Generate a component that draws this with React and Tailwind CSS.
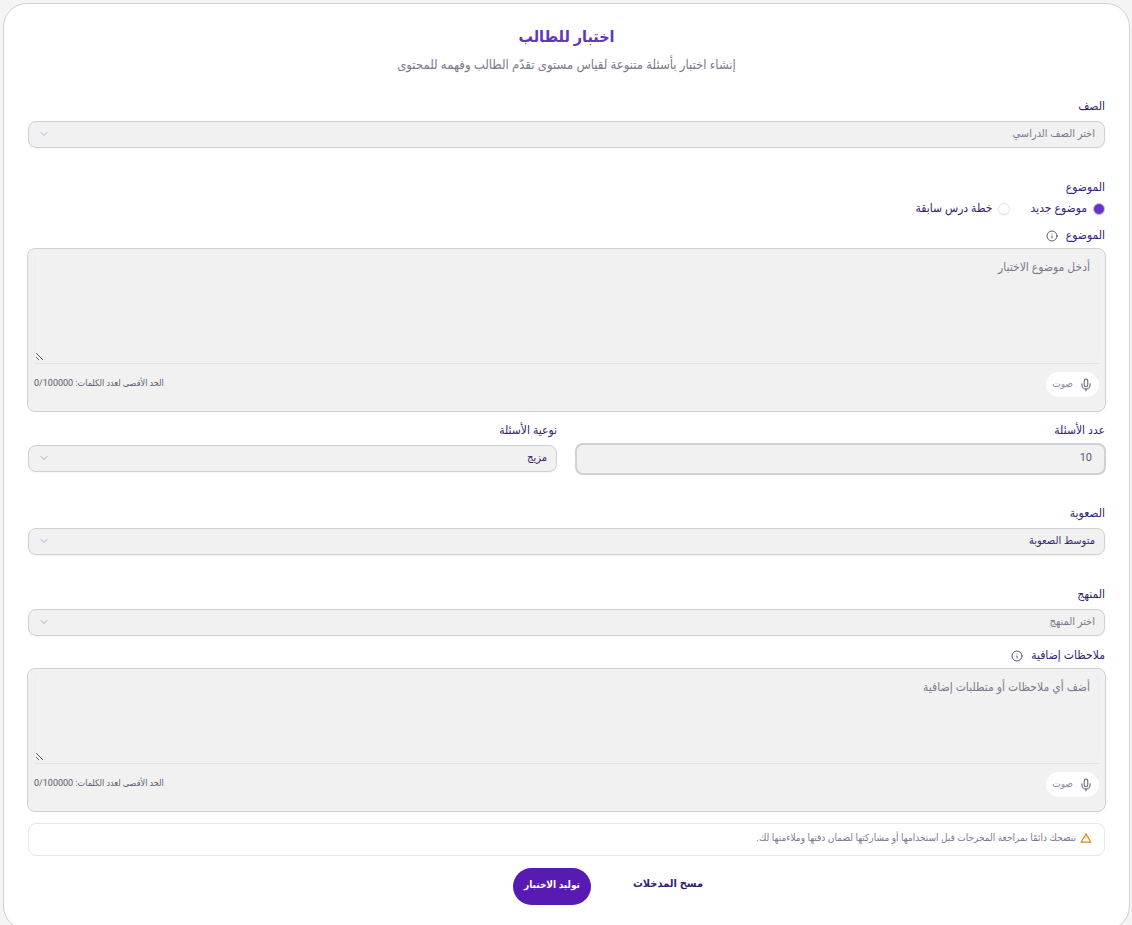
import { useState } from "react";
import { ChevronDown, Info, Mic } from "lucide-react";

function Label({ htmlFor, children }) {
  return (
    <label
      htmlFor={htmlFor}
      className="block text-[12px] leading-4 text-[#35216f]"
    >
      {children}
    </label>
  );
}

function WarningIcon() {
  return (
    <svg
      viewBox="0 0 12 12"
      fill="none"
      stroke="currentColor"
      strokeLinejoin="round"
      strokeLinecap="round"
      className="mb-[3px] size-3 text-[#d08a13]"
      aria-hidden="true"
    >
      <path d="M6 1.8 L10.9 10.2 H1.1 Z" strokeWidth="1.2" />
      <path d="M6 5 V6.2" strokeWidth="0.9" />
    </svg>
  );
}

function SelectField({ id, label, options, placeholder, chevron }) {
  return (
    <div>
      <Label htmlFor={id}>{label}</Label>
      <div className="relative mt-[7px]">
        <select
          id={id}
          className={`block h-[27px] w-full appearance-none rounded-lg border border-[#d0d0d4] bg-[#f1f1f1] px-[9px] text-[11px] shadow-xs outline-none ${
            placeholder ? "text-[#7d7a8c]" : "text-[#3b2a70]"
          }`}
        >
          {options.map((option) => (
            <option key={option}>{option}</option>
          ))}
        </select>
        <ChevronDown
          className={`pointer-events-none absolute top-[7px] left-[10px] size-3 ${chevron}`}
          strokeWidth={2}
        />
      </div>
    </div>
  );
}

function TextBox({ id, label, placeholder, height }) {
  const [value, setValue] = useState("");
  const words = value.trim() ? value.trim().split(/\s+/).length : 0;
  return (
    <div>
      <div className="flex items-center gap-2">
        <Label htmlFor={id}>{label}</Label>
        <Info className="mt-[2px] size-3 text-[#5d5870]" strokeWidth={2} />
      </div>
      <div className="-mx-px mt-[5px] rounded-lg border border-[#d0d0d4] bg-[#f1f1f1] px-[6px] pt-[5px] pb-[14px]">
        <textarea
          id={id}
          value={value}
          onChange={(e) => setValue(e.target.value)}
          placeholder={placeholder}
          className={`block w-full rounded-lg border border-[#ededed] border-t-transparent px-2 py-1 text-[12px] leading-4 text-[#3b2a70] outline-none placeholder:text-[#7d7a8c] ${height}`}
        />
        <div className="mt-px flex items-start justify-between border-t border-[#e3e3e5] pt-2">
          <button
            type="button"
            className="flex h-[25px] items-center gap-[6px] rounded-full bg-white px-[6px] text-[10px] text-[#8b8797]"
          >
            <Mic className="size-[14px] text-[#6f6b80]" strokeWidth={2} />
            <span className="pb-[3px]">صوت</span>
          </button>
          <p className="pt-[5px] text-[9px] leading-3 text-[#5d5870]">
            الحد الأقصى لعدد الكلمات: {words}/100000
          </p>
        </div>
      </div>
    </div>
  );
}

function Topic({ value, text, checked, onChange }) {
  return (
    <label className="flex items-center gap-[6px] text-[12px] leading-4 text-[#35216f]">
      <input
        type="radio"
        name="topic"
        value={value}
        checked={checked}
        onChange={onChange}
        className="mt-0.5 size-3 appearance-none rounded-full border border-[#e2e2e6] bg-white shadow-xs checked:border-[#c9c3dd] checked:bg-[#6534c4]"
      />
      {text}
    </label>
  );
}

export default function App() {
  const [topic, setTopic] = useState("new");
  return (
    <div
      dir="rtl"
      className="min-h-screen bg-[#f4f4f4] pt-[3px] pr-[2px] pl-[3px] font-['Roboto','DejaVu_Sans_Condensed','DejaVu_Sans',sans-serif]"
    >
      <form
        onSubmit={(e) => e.preventDefault()}
        className="rounded-3xl border border-[#d0d0d4] bg-white px-6 pt-[21px] pb-6"
      >
        <header className="text-center">
          <h1 className="text-[16px] leading-6 font-bold text-[#5f37b9]">
            اختبار للطالب
          </h1>
          <p className="mt-2 text-[13px] leading-4 text-[#7d7a8c]">
            إنشاء اختبار بأسئلة متنوعة لقياس مستوى تقدّم الطالب وفهمه للمحتوى
          </p>
        </header>

        <div className="mt-[25px]">
          <SelectField
            id="grade"
            label="الصف"
            options={["اختر الصف الدراسي"]}
            placeholder
            chevron="text-[#9db9e6]"
          />
        </div>

        <fieldset className="mt-[31px]">
          <legend className="text-[12px] leading-4 text-[#35216f]">
            الموضوع
          </legend>
          <div className="mt-[5px] flex gap-5">
            <Topic
              value="new"
              text="موضوع جديد"
              checked={topic === "new"}
              onChange={() => setTopic("new")}
            />
            <Topic
              value="previous"
              text="خطة درس سابقة"
              checked={topic === "previous"}
              onChange={() => setTopic("previous")}
            />
          </div>
        </fieldset>

        <div className="mt-[11px]">
          <TextBox
            id="subject"
            label="الموضوع"
            placeholder="أدخل موضوع الاختبار"
            height="h-[108px]"
          />
        </div>

        <div className="mt-[10px] grid grid-cols-2 gap-[19px]">
          <div>
            <Label htmlFor="count">عدد الأسئلة</Label>
            <div className="-mx-px mt-[5px]">
              <input
                id="count"
                type="text"
                inputMode="numeric"
                defaultValue="10"
                className="block h-8 w-full rounded-lg border-2 border-[#d0d0d6] bg-[#f1f1f1] px-3 pb-1 text-[11px] text-[#5d5870] outline-none"
              />
            </div>
          </div>
          <SelectField
            id="kind"
            label="نوعية الأسئلة"
            options={["مزيج"]}
            chevron="text-[#a9a9b3]"
          />
        </div>

        <div className="mt-[30px]">
          <SelectField
            id="difficulty"
            label="الصعوبة"
            options={["متوسط الصعوبة"]}
            chevron="text-[#8fbbe0]"
          />
        </div>

        <div className="mt-[31px]">
          <SelectField
            id="curriculum"
            label="المنهج"
            options={["اختر المنهج"]}
            placeholder
            chevron="text-[#a9a9b3]"
          />
        </div>

        <div className="mt-[11px]">
          <TextBox
            id="notes"
            label="ملاحظات إضافية"
            placeholder="أضف أي ملاحظات أو متطلبات إضافية"
            height="h-[88px]"
          />
        </div>

        <div className="mt-[11px] flex h-[33px] items-center gap-1 rounded-lg border border-[#e5e5ea] px-3">
          <WarningIcon />
          <p className="pb-1 text-[10px] leading-3 text-[#7d7a8c]">
            ننصحك دائمًا بمراجعة المخرجات قبل استخدامها أو مشاركتها لضمان دقتها
            وملاءمتها لك.
          </p>
        </div>

        <div className="mt-3 flex justify-center gap-[31px] pl-[94px]">
          <button
            type="reset"
            className="h-[37px] px-[11px] pb-1 text-[11px] font-bold text-[#35216f]"
          >
            مسح المدخلات
          </button>
          <button
            type="submit"
            className="h-[37px] rounded-full bg-[#571bb3] px-[11px] pb-1 text-[10px] font-bold text-white"
          >
            توليد الاختبار
          </button>
        </div>
      </form>
    </div>
  );
}
